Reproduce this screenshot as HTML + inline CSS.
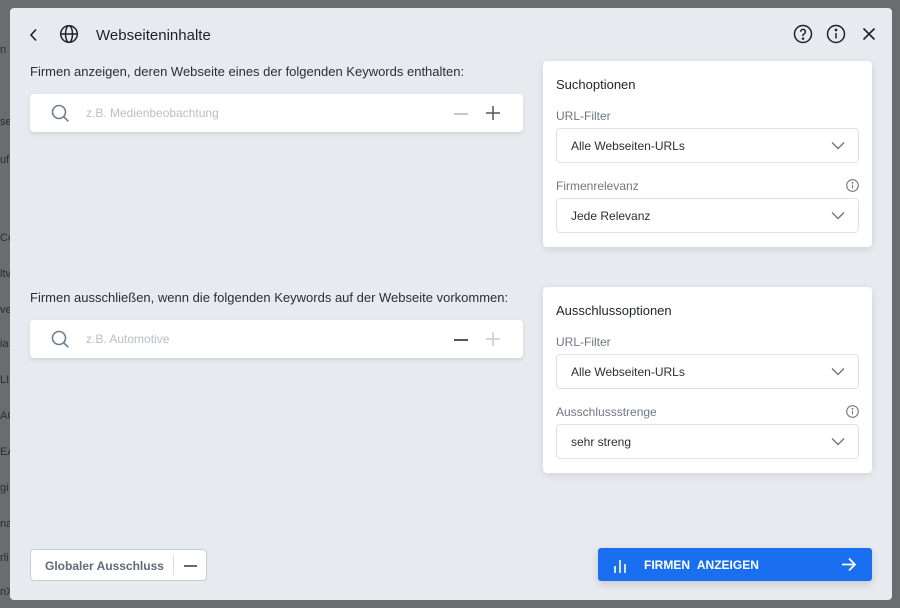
<!DOCTYPE html>
<html><head><meta charset="utf-8"><style>
*{box-sizing:border-box;margin:0;padding:0}
body{width:900px;height:608px;background:#6a6d70;font-family:"Liberation Sans",sans-serif;position:relative;overflow:hidden;color:#1f2328}
.side{position:absolute;left:0;font-size:11px;color:#2a2c2e}
.modal{position:absolute;left:10px;top:8px;width:882px;height:592px;background:#e7ebef;border-radius:4px}
.abs{position:absolute}
.title{left:86px;top:19px;font-size:15px;color:#1f2328}
.lbl{font-size:13px;color:#2b2f33}
.input{background:#fff;border-radius:4px;box-shadow:0 2px 5px rgba(0,0,0,.1);width:493px;height:38px}
.ph{position:absolute;left:56px;top:12px;font-size:12px;color:#b6c0ca}
.card{background:#fff;border-radius:4px;width:329px;box-shadow:0 2px 8px rgba(0,0,0,.1)}
.card h3{position:absolute;left:13px;top:16px;font-size:13px;font-weight:normal;color:#1f2328}
.fl{position:absolute;left:13px;font-size:12px;color:#6d7781}
.sel{position:absolute;left:13px;width:303px;height:35px;border:1px solid #dde2e7;border-radius:4px;font-size:12px;color:#2b2f33;padding:10px 14px}
.sel svg{position:absolute;right:13px;top:12px}
</style></head><body>
<div class="side" style="top:44px">n</div>
<div class="side" style="top:116px">se</div>
<div class="side" style="top:154px">uf</div>
<div class="side" style="top:232px">Co</div>
<div class="side" style="top:268px">ltv</div>
<div class="side" style="top:304px">ve</div>
<div class="side" style="top:338px">ia</div>
<div class="side" style="top:374px">LI</div>
<div class="side" style="top:410px">AG</div>
<div class="side" style="top:446px">EA</div>
<div class="side" style="top:482px">gi</div>
<div class="side" style="top:518px">na</div>
<div class="side" style="top:552px">rli</div>
<div class="side" style="top:586px">nX</div>
<div class="modal">
<svg class="abs" style="left:18px;top:20px" width="12" height="14" viewBox="0 0 12 14"><path d="M8 1.5L3 7l5 5.5" fill="none" stroke="#1f2328" stroke-width="1.6"/></svg>
<svg class="abs" style="left:49px;top:16px" width="20" height="20" viewBox="0 0 20 20" fill="none" stroke="#1f2328" stroke-width="1.5"><circle cx="10" cy="10" r="8.3"/><ellipse cx="10" cy="10" rx="3.5" ry="8.3"/><path d="M1.7 10h16.6"/></svg>
<div class="abs title">Webseiteninhalte</div>
<svg class="abs" style="left:783px;top:16px" width="20" height="20" viewBox="0 0 20 20" fill="none" stroke="#1f2328" stroke-width="1.5"><circle cx="10" cy="10" r="8.5"/><path d="M7.6 7.8a2.4 2.4 0 1 1 3.3 2.2c-.6.3-.9.8-.9 1.5v.6"/><circle cx="10" cy="14.6" r=".5" fill="#1f2328"/></svg>
<svg class="abs" style="left:816px;top:16px" width="20" height="20" viewBox="0 0 20 20" fill="none" stroke="#1f2328" stroke-width="1.5"><circle cx="10" cy="10" r="8.5"/><path d="M10 9v5.5"/><circle cx="10" cy="6" r=".6" fill="#1f2328"/></svg>
<svg class="abs" style="left:852px;top:19px" width="14" height="14" viewBox="0 0 14 14" stroke="#1f2328" stroke-width="1.6"><path d="M1.5 1.5l11 11M12.5 1.5l-11 11"/></svg>

<div class="abs lbl" style="left:20px;top:56px">Firmen anzeigen, deren Webseite eines der folgenden Keywords enthalten:</div>
<div class="abs input" style="left:20px;top:86px">
<svg class="abs" style="left:21px;top:10px" width="19" height="19" viewBox="0 0 19 19" fill="none" stroke="#6d7f8e" stroke-width="1.6"><circle cx="8" cy="8" r="6.5"/><path d="M12.8 12.8l4.5 4.5"/></svg>
<div class="ph">z.B. Medienbeobachtung</div>
<div class="abs" style="left:424px;top:19px;width:14px;height:1.5px;background:#c2cad2"></div>
<svg class="abs" style="left:456px;top:12px" width="14" height="14" stroke="#4d5965" stroke-width="1.5"><path d="M7 0v14M0 7h14"/></svg>
</div>

<div class="abs lbl" style="left:20px;top:282px">Firmen ausschließen, wenn die folgenden Keywords auf der Webseite vorkommen:</div>
<div class="abs input" style="left:20px;top:312px">
<svg class="abs" style="left:21px;top:10px" width="19" height="19" viewBox="0 0 19 19" fill="none" stroke="#6d7f8e" stroke-width="1.6"><circle cx="8" cy="8" r="6.5"/><path d="M12.8 12.8l4.5 4.5"/></svg>
<div class="ph">z.B. Automotive</div>
<div class="abs" style="left:424px;top:19px;width:14px;height:1.5px;background:#4d5965"></div>
<svg class="abs" style="left:456px;top:12px" width="14" height="14" stroke="#c2cad2" stroke-width="1.5"><path d="M7 0v14M0 7h14"/></svg>
</div>

<div class="abs card" style="left:533px;top:53px;height:186px">
<h3>Suchoptionen</h3>
<div class="fl" style="top:48px">URL-Filter</div>
<div class="sel" style="top:67px">Alle Webseiten-URLs<svg width="14" height="9" viewBox="0 0 14 9" fill="none" stroke="#6d7781" stroke-width="1.4"><path d="M1 1.5l6 6 6-6"/></svg></div>
<div class="fl" style="top:118px">Firmenrelevanz</div>
<svg class="abs" style="left:303px;top:118px" width="13" height="13" viewBox="0 0 13 13" fill="none" stroke="#6d7781" stroke-width="1.1"><circle cx="6.5" cy="6.5" r="5.8"/><path d="M6.5 5.6v3.8"/><circle cx="6.5" cy="3.8" r=".4" fill="#6d7781"/></svg>
<div class="sel" style="top:137px">Jede Relevanz<svg width="14" height="9" viewBox="0 0 14 9" fill="none" stroke="#6d7781" stroke-width="1.4"><path d="M1 1.5l6 6 6-6"/></svg></div>
</div>

<div class="abs card" style="left:533px;top:279px;height:186px">
<h3>Ausschlussoptionen</h3>
<div class="fl" style="top:48px">URL-Filter</div>
<div class="sel" style="top:67px">Alle Webseiten-URLs<svg width="14" height="9" viewBox="0 0 14 9" fill="none" stroke="#6d7781" stroke-width="1.4"><path d="M1 1.5l6 6 6-6"/></svg></div>
<div class="fl" style="top:118px">Ausschlussstrenge</div>
<svg class="abs" style="left:303px;top:118px" width="13" height="13" viewBox="0 0 13 13" fill="none" stroke="#6d7781" stroke-width="1.1"><circle cx="6.5" cy="6.5" r="5.8"/><path d="M6.5 5.6v3.8"/><circle cx="6.5" cy="3.8" r=".4" fill="#6d7781"/></svg>
<div class="sel" style="top:137px">sehr streng<svg width="14" height="9" viewBox="0 0 14 9" fill="none" stroke="#6d7781" stroke-width="1.4"><path d="M1 1.5l6 6 6-6"/></svg></div>
</div>

<div class="abs" style="left:20px;top:541px;width:177px;height:32px;background:#fff;border:1px solid #c6ced6;border-radius:4px">
<div class="abs" style="left:14px;top:9px;font-size:12px;font-weight:bold;color:#5f6b77">Globaler Ausschluss</div>
<div class="abs" style="left:142px;top:5px;width:1px;height:20px;background:#d8dee4"></div>
<div class="abs" style="left:153px;top:15px;width:13px;height:1.6px;background:#5f6b77"></div>
</div>

<div class="abs" style="left:588px;top:540px;width:274px;height:33px;background:#1a6ff0;border-radius:3px;box-shadow:0 3px 8px rgba(0,0,0,.15)">
<svg class="abs" style="left:15px;top:9px" width="14" height="16" stroke="#fff" stroke-width="1.6"><path d="M2 9v7M7 3v13M12 7v9"/></svg>
<div class="abs" style="left:46px;top:10px;font-size:12px;font-weight:bold;color:#fff;word-spacing:4px">FIRMEN ANZEIGEN</div>
<svg class="abs" style="left:243px;top:9px" width="16" height="15" viewBox="0 0 16 15" fill="none" stroke="#fff" stroke-width="1.7"><path d="M1 7.5h13M8 1.5l6 6-6 6"/></svg>
</div>
</div>
</body></html>
